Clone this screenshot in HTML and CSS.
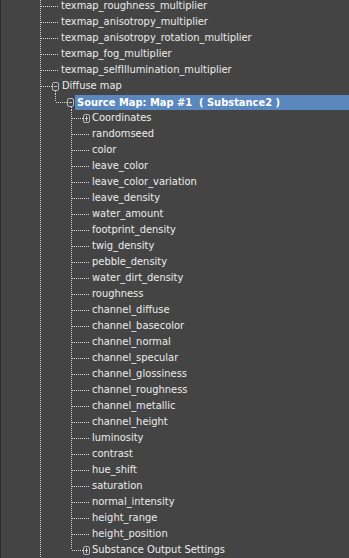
FILE: index.html
```html
<!DOCTYPE html>
<html lang="en">
<head>
  <meta charset="UTF-8" />
  <meta name="viewport" content="width=device-width, initial-scale=1.0"/>
  <title>Material Tree</title>
  <link rel="stylesheet" href="styles.css">
</head>
<body>
  <ul class="tree">
    <li class="row l0"><span class="stub"></span><span class="label">texmap_roughness_multiplier</span></li>
    <li class="row l0"><span class="stub"></span><span class="label">texmap_anisotropy_multiplier</span></li>
    <li class="row l0"><span class="stub"></span><span class="label">texmap_anisotropy_rotation_multiplier</span></li>
    <li class="row l0"><span class="stub"></span><span class="label">texmap_fog_multiplier</span></li>
    <li class="row l0"><span class="stub"></span><span class="label">texmap_selfIllumination_multiplier</span></li>
    <li>
      <div class="row l0 open"><span class="stub"></span><span class="box minus"></span><span class="label">Diffuse map</span></div>
      <ul class="sub sub1">
        <li>
          <div class="row l1 open"><span class="stub"></span><span class="box minus"></span><span class="label selected">Source Map: Map #1&nbsp; ( Substance2 )</span></div>
          <ul class="sub sub2">
            <li class="row l2"><span class="stub"></span><span class="box plus"></span><span class="label">Coordinates</span></li>
            <li class="row l2"><span class="stub"></span><span class="label">randomseed</span></li>
            <li class="row l2"><span class="stub"></span><span class="label">color</span></li>
            <li class="row l2"><span class="stub"></span><span class="label">leave_color</span></li>
            <li class="row l2"><span class="stub"></span><span class="label">leave_color_variation</span></li>
            <li class="row l2"><span class="stub"></span><span class="label">leave_density</span></li>
            <li class="row l2"><span class="stub"></span><span class="label">water_amount</span></li>
            <li class="row l2"><span class="stub"></span><span class="label">footprint_density</span></li>
            <li class="row l2"><span class="stub"></span><span class="label">twig_density</span></li>
            <li class="row l2"><span class="stub"></span><span class="label">pebble_density</span></li>
            <li class="row l2"><span class="stub"></span><span class="label">water_dirt_density</span></li>
            <li class="row l2"><span class="stub"></span><span class="label">roughness</span></li>
            <li class="row l2"><span class="stub"></span><span class="label">channel_diffuse</span></li>
            <li class="row l2"><span class="stub"></span><span class="label">channel_basecolor</span></li>
            <li class="row l2"><span class="stub"></span><span class="label">channel_normal</span></li>
            <li class="row l2"><span class="stub"></span><span class="label">channel_specular</span></li>
            <li class="row l2"><span class="stub"></span><span class="label">channel_glossiness</span></li>
            <li class="row l2"><span class="stub"></span><span class="label">channel_roughness</span></li>
            <li class="row l2"><span class="stub"></span><span class="label">channel_metallic</span></li>
            <li class="row l2"><span class="stub"></span><span class="label">channel_height</span></li>
            <li class="row l2"><span class="stub"></span><span class="label">luminosity</span></li>
            <li class="row l2"><span class="stub"></span><span class="label">contrast</span></li>
            <li class="row l2"><span class="stub"></span><span class="label">hue_shift</span></li>
            <li class="row l2"><span class="stub"></span><span class="label">saturation</span></li>
            <li class="row l2"><span class="stub"></span><span class="label">normal_intensity</span></li>
            <li class="row l2"><span class="stub"></span><span class="label">height_range</span></li>
            <li class="row l2"><span class="stub"></span><span class="label">height_position</span></li>
            <li class="row l2"><span class="stub"></span><span class="box plus"></span><span class="label">Substance Output Settings</span></li>
          </ul>
        </li>
      </ul>
    </li>
  </ul>
</body>
</html>
```

FILE: styles.css
```css
html, body {
  margin: 0;
  height: 100%;
}

body {
  background: #444444;
  box-shadow: inset 1px 0 #2a2a2a;
  color: #ececec;
  font-family: 'DejaVu Sans Condensed', 'DejaVu Sans', sans-serif;
  font-size: 11px;
  overflow: hidden;
}

ul {
  list-style: none;
  margin: 0;
  padding: 0;
}

/* vertical dotted lines */
.tree {
  margin-top: -2px;
  min-height: 100vh;
  background: repeating-linear-gradient(to bottom, #d8d8d8 0 1px, transparent 1px 2px) no-repeat 40px 0 / 1px 100%;
}

.sub1 {
  background: repeating-linear-gradient(to bottom, #d8d8d8 0 1px, transparent 1px 2px) no-repeat 55px 0 / 1px 8px;
}

.sub2 {
  background: repeating-linear-gradient(to bottom, #d8d8d8 0 1px, transparent 1px 2px) no-repeat 71px 0 / 1px calc(100% - 8px);
}

.row {
  display: flex;
  align-items: center;
  height: 16px;
  line-height: 16px;
  white-space: nowrap;
}

.stub {
  flex: none;
  height: 1px;
  background: repeating-linear-gradient(to right, #d8d8d8 0 1px, transparent 1px 2px);
}

.l0 { padding-left: 41px; }
.l0 .stub { width: 17px; margin-right: 3px; }
.l0.open .stub { width: 11px; margin-right: 0; }

.l1 { padding-left: 56px; }
.l1 .stub { width: 11px; }

.l2 { padding-left: 72px; }
.l2 .stub { width: 18px; margin-right: 2px; }
.l2 .stub:has(+ .box) { width: 11px; margin-right: 0; }

.open {
  background: repeating-linear-gradient(to bottom, #d8d8d8 0 1px, transparent 1px 2px) no-repeat 0 13px / 1px 3px;
}
.l0.open { background-position: 55px 13px; }
.l1.open { background-position: 71px 13px; }

.box {
  flex: none;
  position: relative;
  box-sizing: border-box;
  width: 7px;
  height: 9px;
  margin-right: 2px;
  border: 1px solid #b8b8b8;
  border-radius: 2px;
}

.l0 .box { margin-right: 3px; }
.l1 .box { margin-right: 1px; }

.box::before {
  content: "";
  position: absolute;
  left: 1px;
  right: 1px;
  top: 3px;
  height: 1px;
  background: #c8c8c8;
}

.plus::after {
  content: "";
  position: absolute;
  left: 2px;
  top: 1px;
  width: 1px;
  height: 5px;
  background: #c8c8c8;
}

.selected {
  flex: 1;
  height: 15px;
  line-height: 15px;
  padding-left: 2px;
  background: #5b87bf;
  color: #ffffff;
  font-weight: bold;
}
```
